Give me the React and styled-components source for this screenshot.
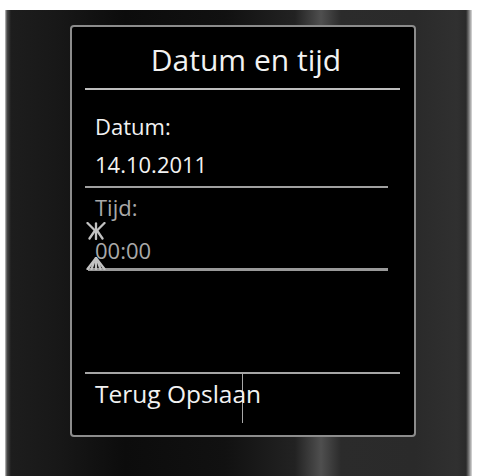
import styled, { createGlobalStyle } from 'styled-components'

const GlobalStyle = createGlobalStyle`
    html, body {
        margin: 0;
        padding: 0;
        background: #ffffff;
    }
    body {
        font-family: "Open Sans", "Noto Sans", sans-serif;
    }
`

const Page = styled.div`
    width: 479px;
    height: 476px;
    overflow: hidden;
    padding: 10px 0 0 5px;
    box-sizing: border-box;
`

const Handset = styled.div`
    width: 467px;
    height: 480px;
    box-sizing: border-box;
    padding: 15px 0 0 65px;
    background: linear-gradient(90deg,
        #c8c8c8 0px, #4a4a4a 2px, #1d1d1d 6px, #181818 50px,
        #0c0c0c 120px, #111111 220px, #222222 290px, #4f4f4f 316px,
        #2b2b2b 336px, #2a2a2a 410px, #303030 452px, #2a2a2a 461px,
        #7a7a7a 464px, #dcdcdc 467px);
`

const Screen = styled.div`
    width: 346px;
    height: 412px;
    box-sizing: border-box;
    border: 2px solid #8c8c8c;
    border-radius: 4px;
    background: #000000;
    display: flex;
    flex-direction: column;
    color: #f2f2f2;
`

const Title = styled.div`
    padding: 14px 0 0 6px;
    height: 39px;
    line-height: 38px;
    font-size: 30px;
    text-align: center;
`

const Rule = styled.div`
    height: ${p => p.$thick || 2}px;
    background: ${p => p.$color || '#a6a6a6'};
    margin: ${p => p.$top || 0}px ${p => p.$right || 14}px 0 ${p => p.$left || 13}px;
    flex-shrink: 0;
`

const Field = styled.div`
    padding-left: 23px;
    height: ${p => p.$height || 38}px;
    line-height: 38px;
    font-size: 22px;
    margin-top: ${p => p.$top || 0}px;
    color: ${p => (p.$dim ? '#a9a9a9' : '#f2f2f2')};
    position: relative;
`

const Cursor = styled.svg`
    position: absolute;
    left: 14px;
    top: ${p => p.$top}px;
`

const Spacer = styled.div`
    flex: ${p => p.$fixed ? `0 0 ${p.$fixed}px` : 1};
`

const SoftKeys = styled.div`
    display: flex;
    height: 49px;
`

const SoftKey = styled.div`
    width: 171px;
    box-sizing: border-box;
    flex-shrink: 0;
    border-right: 1.5px solid #a8a8a8;
    padding: 1px 0 0 23px;
    line-height: 38px;
    font-size: 24.5px;
    white-space: nowrap;
`

const BlinkMark = () => (
    <>
        <Cursor $top={-9} width="20" height="18" viewBox="0 0 20 18">
            <g stroke="#c2c2c2" strokeWidth="2.3" fill="none" strokeLinecap="round">
                <path d="M1.5 1 L9 8.5" />
                <path d="M18.5 1 L11 8.5" />
                <path d="M10 1.5 L10 17" />
                <path d="M9 8.5 L3.5 16.5" />
                <path d="M11 8.5 L16.5 16.5" />
            </g>
        </Cursor>
        <Cursor $top={26} width="20" height="13" viewBox="0 0 20 13">
            <g stroke="#c2c2c2" strokeWidth="2.3" fill="none" strokeLinecap="round">
                <path d="M10 1 L1.5 12" />
                <path d="M10 1 L18.5 12" />
                <path d="M10 1 L10 12" />
                <path d="M8 5 L5.5 12" />
                <path d="M12 5 L14.5 12" />
            </g>
        </Cursor>
    </>
)

export default function App() {
    return (
        <Page>
            <GlobalStyle />
            <Handset>
                <Screen>
                    <Title>Datum en tijd</Title>
                    <Rule $top={8} $color="#bdbdbd" />
                    <Field $top={17}>Datum:</Field>
                    <Field>14.10.2011</Field>
                    <Rule $top={3} $right={26} $color="#a0a0a0" />
                    <Field $dim>Tijd:</Field>
                    <Field $dim $top={5} $height={37}>
                        <BlinkMark />
                        00:00
                    </Field>
                    <Rule $thick={3} $right={26} $left={16} $color="#999999" />
                    <Spacer />
                    <Rule $color="#a6a6a6" />
                    <SoftKeys>
                        <SoftKey>Terug Opslaan</SoftKey>
                    </SoftKeys>
                    <Spacer $fixed={12} />
                </Screen>
            </Handset>
        </Page>
    )
}
